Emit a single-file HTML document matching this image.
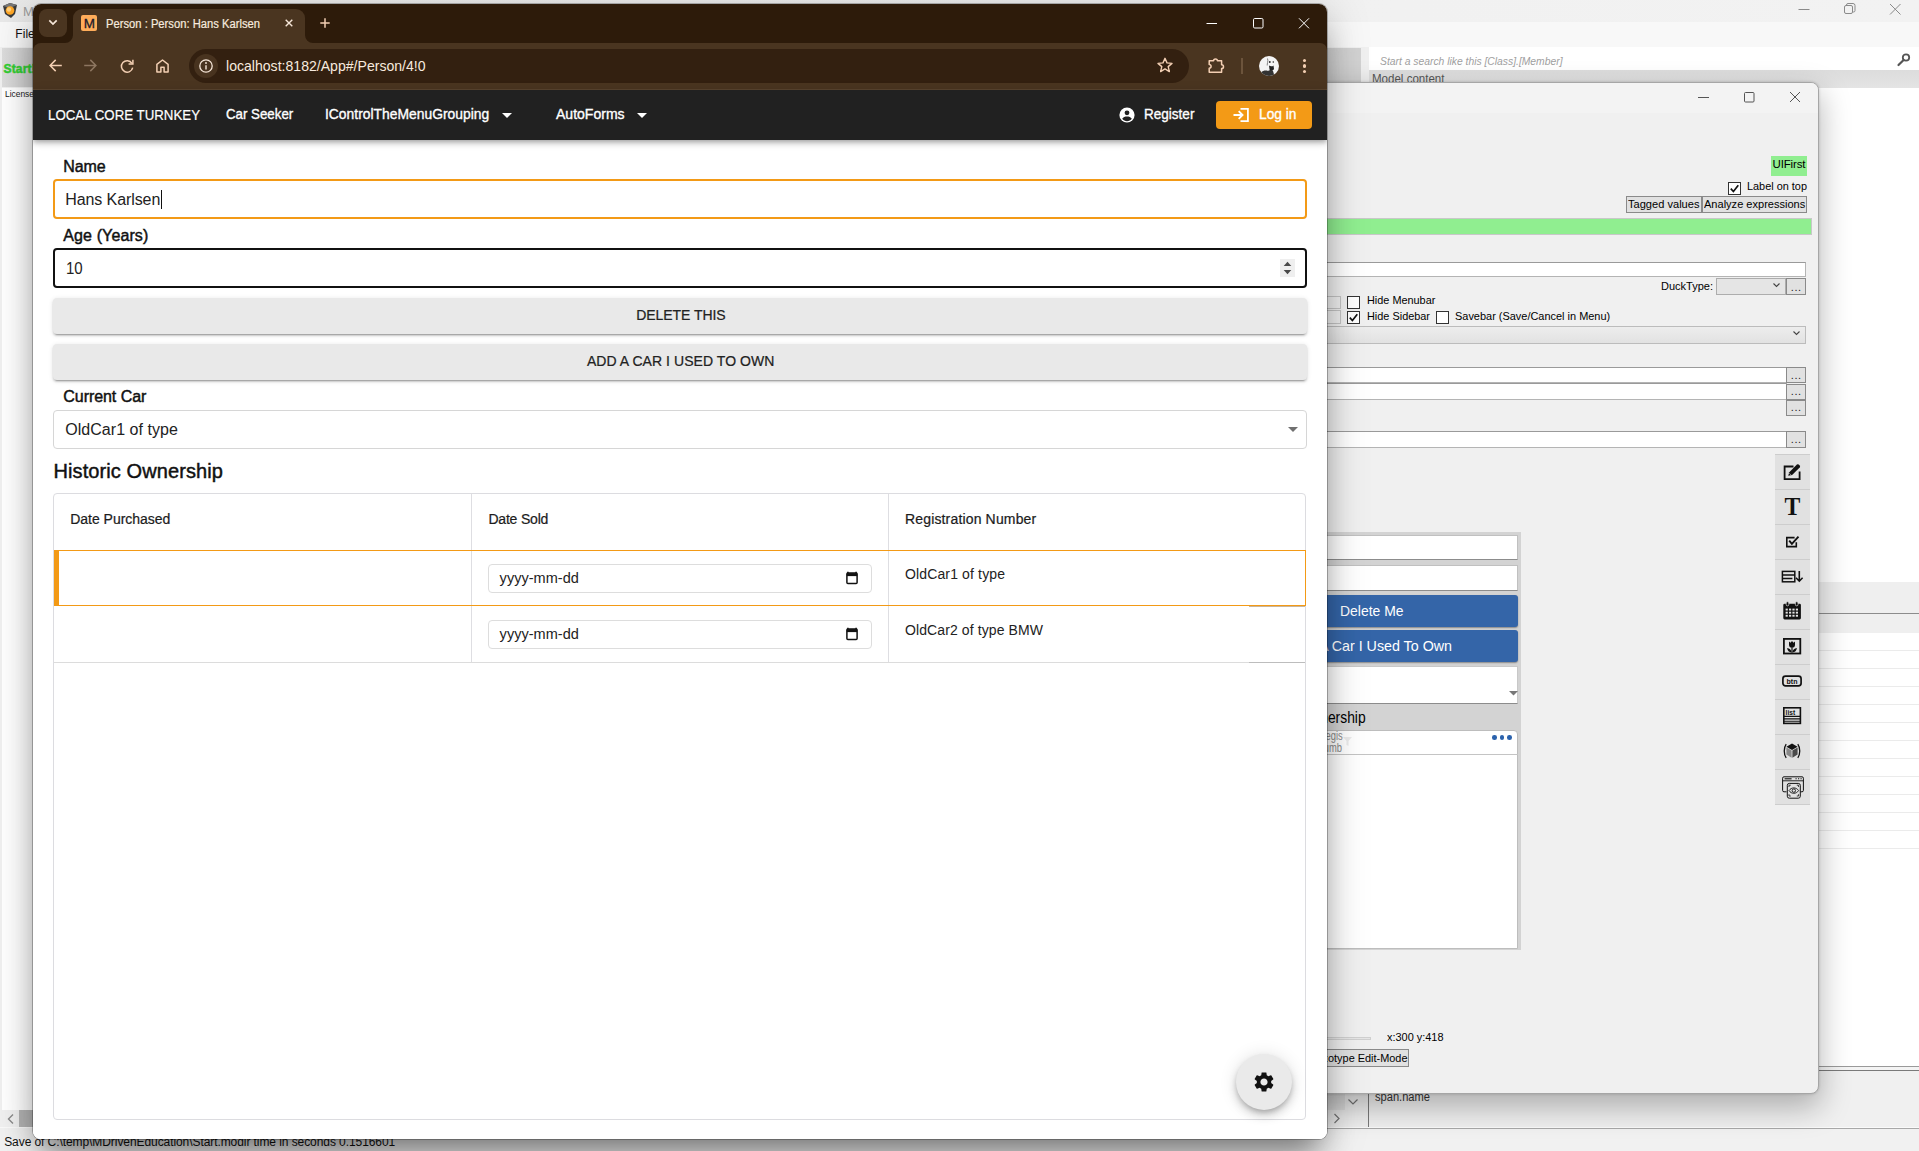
<!DOCTYPE html>
<html lang="en"><head><meta charset="utf-8"><title>Person : Person: Hans Karlsen</title>
<style>
html,body{margin:0;padding:0;background:#fff}
body{width:1919px;height:1151px;overflow:hidden;font-family:"Liberation Sans",sans-serif}
#root{position:relative;width:1919px;height:1151px;overflow:hidden;background:#fff}
#root div,#root svg{position:absolute}
.t{position:absolute;white-space:nowrap;line-height:normal}
</style></head><body><div id="root">
<div style="left:0px;top:0px;width:1919px;height:22px;background:linear-gradient(90deg,#e9e9e9 0,#eeeeee 300px,#f1f1f1 1400px,#f2f2f2 100%)"></div>
<div style="left:0px;top:22px;width:1919px;height:25px;background:#f8f8f8"></div>
<svg style="position:absolute;left:2px;top:2px" width="16" height="16" viewBox="0 0 16 16"><polygon points="1,4 8,1 15,3 13,12 9,16 3,12" fill="#3a3a3a"/><polygon points="1,4 8,1 15,3 8,6" fill="#777"/><circle cx="8" cy="8.5" r="4.3" fill="#ffa726"/><circle cx="7" cy="7.5" r="2.2" fill="#ffd180"/></svg>
<span id="t0" class="t" style="left:23px;top:4.00px;font-size:13px;color:#9a9a9a;">MDriven Designer</span>
<span id="t1" class="t" style="left:15.3px;top:27.00px;font-size:12px;color:#111;letter-spacing:0.052px;">File</span>
<div style="left:0px;top:47px;width:1919px;height:41px;background:#f0f0f0"></div>
<div style="left:2px;top:48px;width:1359px;height:39px;background:linear-gradient(90deg,#dcdcdc 0,#c9c9c9 40px,#d2d2d2 100%)"></div>
<span id="t2" class="t" style="left:3.6px;top:62.00px;font-size:12px;color:#32cd32;font-weight:700;-webkit-text-stroke:0.5px #32cd32;letter-spacing:0.131px;">Start!</span>
<div style="left:1369px;top:47px;width:550px;height:23px;background:#fff"></div>
<span id="t3" class="t" style="left:1380px;top:55.00px;font-size:11.5px;color:#a0a0a0;font-style:italic;transform:scaleX(0.8980);transform-origin:0 0;">Start a search like this [Class].[Member]</span>
<svg style="position:absolute;left:1896px;top:52px" width="16" height="16" viewBox="0 0 16 16"><circle cx="10" cy="5.5" r="3.2" fill="none" stroke="#555" stroke-width="1.8"/><path d="M7.6 8 L2.5 13" stroke="#555" stroke-width="2.2" stroke-linecap="round"/></svg>
<div style="left:1369px;top:70px;width:550px;height:18px;background:linear-gradient(#dcdcdc,#e4e4e4)"></div>
<span id="t4" class="t" style="left:1371.7px;top:72.00px;font-size:12px;color:#555;transform:scaleX(0.9617);transform-origin:0 0;">Model content</span>
<svg style="position:absolute;left:1790px;top:0" width="129" height="22" viewBox="0 0 129 22" fill="none" stroke="#8a8a8a" stroke-width="1"><path d="M8.5 9.5h11"/><rect x="54.5" y="5.5" width="8" height="8" rx="1.5"/><path d="M56.5 5.5v-0.5a1.5 1.5 0 0 1 1.5-1.5h5a2 2 0 0 1 2 2v5a1.5 1.5 0 0 1-1.5 1.5h-0.5"/><path d="M100 4l10.5 10.5M110.5 4l-10.5 10.5"/></svg>
<div style="left:0px;top:88px;width:1919px;height:1040px;background:#fff"></div>
<div style="left:0px;top:88px;width:2px;height:1040px;background:#f0f0f0"></div>
<span id="t5" class="t" style="left:4.6px;top:89.00px;font-size:9px;color:#222;transform:scaleX(0.9345);transform-origin:0 0;">License</span>
<div style="left:1800px;top:582px;width:119px;height:31px;background:#efefef"></div>
<div style="left:1800px;top:612.5px;width:119px;height:1px;background:#8c8c8c"></div>
<div style="left:1800px;top:613.5px;width:119px;height:19.5px;background:#efefef"></div>
<div style="left:1800px;top:650px;width:119px;height:1px;background:#ebebeb"></div><div style="left:1800px;top:668px;width:119px;height:1px;background:#ebebeb"></div><div style="left:1800px;top:686px;width:119px;height:1px;background:#ebebeb"></div><div style="left:1800px;top:704px;width:119px;height:1px;background:#ebebeb"></div><div style="left:1800px;top:722px;width:119px;height:1px;background:#ebebeb"></div><div style="left:1800px;top:740px;width:119px;height:1px;background:#ebebeb"></div><div style="left:1800px;top:758px;width:119px;height:1px;background:#ebebeb"></div><div style="left:1800px;top:776px;width:119px;height:1px;background:#ebebeb"></div><div style="left:1800px;top:794px;width:119px;height:1px;background:#ebebeb"></div><div style="left:1800px;top:812px;width:119px;height:1px;background:#ebebeb"></div><div style="left:1800px;top:830px;width:119px;height:1px;background:#ebebeb"></div><div style="left:1800px;top:848px;width:119px;height:1px;background:#ebebeb"></div>
<div style="left:1327px;top:1066px;width:592px;height:1px;background:#9a9a9a"></div>
<div style="left:1327px;top:1067px;width:592px;height:3px;background:#f4f4f4"></div>
<div style="left:1327px;top:1070px;width:592px;height:58px;background:#f0f0f0"></div>
<div style="left:1368px;top:1070px;width:560px;height:58px;border:1px solid #7a7a7a;background:#f0f0f0;box-sizing:border-box"></div>
<span id="t6" class="t" style="left:1374.8px;top:1090.00px;font-size:12px;color:#333;transform:scaleX(0.9263);transform-origin:0 0;">span.name</span>
<div style="left:1327px;top:1092px;width:18px;height:18px;background:#e4e4e4"></div>
<svg style="position:absolute;left:1330px;top:1094px" width="30" height="32" viewBox="0 0 30 32" fill="none" stroke="#777" stroke-width="1.2"><path d="M18.5 5.5l4.5 4.5l4.5-4.5"/><path d="M4.5 20l4.5 4.5l-4.5 4.5"/></svg>
<div style="left:0px;top:1110px;width:1327px;height:17px;background:#f0f0f0"></div>
<div style="left:19px;top:1110px;width:1308px;height:17px;background:#b4b4b4"></div>
<svg style="position:absolute;left:6px;top:1112px" width="10" height="14" viewBox="0 0 10 14" fill="none" stroke="#8a8a8a" stroke-width="1.4"><path d="M7 2.5l-4.5 4.5l4.5 4.5"/></svg>
<div style="left:0px;top:1127px;width:1919px;height:1px;background:#fafafa"></div>
<div style="left:0px;top:1128px;width:1919px;height:23px;background:#f1f1f1"></div>
<div style="left:1327px;top:1128px;width:592px;height:1px;background:#a8a8a8"></div>
<span id="t7" class="t" style="left:4.2px;top:1135.00px;font-size:12px;color:#111;letter-spacing:-0.075px;">Save of C:\temp\MDrivenEducation\Start.modlr time in seconds 0.1516601</span>
<div style="left:900px;top:82px;width:918.5px;height:1011.5px;background:#f0f0f0;border:1px solid #a6a6a6;box-sizing:border-box;border-radius:8px;box-shadow:0 12px 30px 2px rgba(0,0,0,0.27),0 0 3px rgba(0,0,0,0.18);"></div>
<div style="left:901px;top:83px;width:916.5px;height:30px;background:#f3f3f3;border-radius:7px 7px 0 0"></div>
<svg style="position:absolute;left:1690px;top:86px" width="120" height="22" viewBox="0 0 120 22" fill="none" stroke="#555" stroke-width="1"><path d="M8 11.5h11"/><rect x="54.5" y="6.5" width="9.5" height="9.5" rx="1"/><path d="M100 6l10 10M110 6l-10 10"/></svg>
<div style="left:1770.5px;top:156px;width:36.5px;height:20px;background:#90ee90"></div>
<span id="t8" class="t" style="left:1772.5px;top:158.00px;font-size:11.5px;color:#000;letter-spacing:-0.143px;">UIFirst</span>
<div style="left:1728px;top:182px;width:13px;height:13px;background:#fff;border:1px solid #333;box-sizing:border-box;"><svg style="position:absolute;left:0;top:0" width="11" height="11" viewBox="0 0 11 11"><path d="M1.8 5.6l2.6 2.9l4.9-6.3" fill="none" stroke="#111" stroke-width="1.7"/></svg></div>
<span id="t9" class="t" style="left:1746.9px;top:180.00px;font-size:11.5px;color:#000;transform:scaleX(0.9477);transform-origin:0 0;">Label on top</span>
<div style="left:1626px;top:196px;width:76px;height:17px;background:#e1e1e1;border:1px solid #8a8a8a;box-sizing:border-box;"></div>
<span id="t10" class="t" style="left:1628.3px;top:198.00px;font-size:11.5px;color:#000;transform:scaleX(0.9640);transform-origin:0 0;">Tagged values</span>
<div style="left:1701.5px;top:196px;width:105.5px;height:17px;background:#e1e1e1;border:1px solid #8a8a8a;box-sizing:border-box;"></div>
<span id="t11" class="t" style="left:1704px;top:198.00px;font-size:11.5px;color:#000;transform:scaleX(0.9603);transform-origin:0 0;">Analyze expressions</span>
<div style="left:1200px;top:218px;width:612px;height:17px;background:#90ee90;border:1px solid #c8c8c8;box-sizing:border-box"></div>
<div style="left:1200px;top:262px;width:606px;height:14.5px;background:#fff;border:1px solid #b4b4b4;border-top-color:#9a9a9a;box-sizing:border-box;"></div>
<span id="t12" class="t" style="left:1660.7px;top:280.00px;font-size:11.5px;color:#000;transform:scaleX(0.9571);transform-origin:0 0;">DuckType:</span>
<div style="left:1716px;top:277.5px;width:70px;height:17.5px;background:#e5e5e5;border:1px solid #adadad;box-sizing:border-box"></div>
<svg style="position:absolute;left:1772px;top:282px" width="9" height="7" viewBox="0 0 9 7" fill="none" stroke="#444" stroke-width="1.1"><path d="M1.5 1.5l3 3l3-3"/></svg>
<div style="left:1786.4px;top:277.5px;width:19.6px;height:17.5px;background:#e1e1e1;border:1px solid #8a8a8a;box-sizing:border-box;"><span class="t" style="left:0;right:0;text-align:center;top:3.0px;font-size:11px;line-height:11px;color:#222;letter-spacing:0.5px">...</span></div>
<div style="left:1300px;top:295.5px;width:40.5px;height:13.5px;background:#f0f0f0;border:1px solid #c4c4c4;box-sizing:border-box"></div>
<div style="left:1300px;top:310px;width:40.5px;height:14px;background:#f0f0f0;border:1px solid #c4c4c4;box-sizing:border-box"></div>
<div style="left:1347px;top:296px;width:13px;height:13px;background:#fff;border:1px solid #333;box-sizing:border-box;"></div>
<span id="t13" class="t" style="left:1366.5px;top:294.00px;font-size:11.5px;color:#000;transform:scaleX(0.9455);transform-origin:0 0;">Hide Menubar</span>
<div style="left:1347px;top:311.3px;width:13px;height:13px;background:#fff;border:1px solid #333;box-sizing:border-box;"><svg style="position:absolute;left:0;top:0" width="11" height="11" viewBox="0 0 11 11"><path d="M1.8 5.6l2.6 2.9l4.9-6.3" fill="none" stroke="#111" stroke-width="1.7"/></svg></div>
<span id="t14" class="t" style="left:1366.5px;top:310.00px;font-size:11.5px;color:#000;transform:scaleX(0.9476);transform-origin:0 0;">Hide Sidebar</span>
<div style="left:1436px;top:311.3px;width:13px;height:13px;background:#fff;border:1px solid #333;box-sizing:border-box;"></div>
<span id="t15" class="t" style="left:1455px;top:310.00px;font-size:11.5px;color:#000;transform:scaleX(0.9521);transform-origin:0 0;">Savebar (Save/Cancel in Menu)</span>
<div style="left:1200px;top:325.5px;width:606px;height:18px;background:linear-gradient(#ededed,#e2e2e2);border:1px solid #bcbcbc;box-sizing:border-box"></div>
<svg style="position:absolute;left:1792px;top:330px" width="9" height="7" viewBox="0 0 9 7" fill="none" stroke="#444" stroke-width="1.1"><path d="M1.5 1.5l3 3l3-3"/></svg>
<div style="left:1200px;top:367.3px;width:587px;height:16px;background:#fff;border:1px solid #b4b4b4;border-top-color:#9a9a9a;box-sizing:border-box;"></div>
<div style="left:1786.4px;top:367.3px;width:19.6px;height:16px;background:#e1e1e1;border:1px solid #8a8a8a;box-sizing:border-box;"><span class="t" style="left:0;right:0;text-align:center;top:1.5px;font-size:11px;line-height:11px;color:#222;letter-spacing:0.5px">...</span></div>
<div style="left:1200px;top:383.3px;width:587px;height:16.5px;background:#fff;border:1px solid #b4b4b4;border-top-color:#9a9a9a;box-sizing:border-box;"></div>
<div style="left:1786.4px;top:383.5px;width:19.6px;height:16.3px;background:#e1e1e1;border:1px solid #8a8a8a;box-sizing:border-box;"><span class="t" style="left:0;right:0;text-align:center;top:1.8px;font-size:11px;line-height:11px;color:#222;letter-spacing:0.5px">...</span></div>
<div style="left:1786.4px;top:400.2px;width:19.6px;height:15.8px;background:#e1e1e1;border:1px solid #8a8a8a;box-sizing:border-box;"><span class="t" style="left:0;right:0;text-align:center;top:1.3px;font-size:11px;line-height:11px;color:#222;letter-spacing:0.5px">...</span></div>
<div style="left:1200px;top:431px;width:587px;height:16.7px;background:#fff;border:1px solid #b4b4b4;border-top-color:#9a9a9a;box-sizing:border-box;"></div>
<div style="left:1786.4px;top:431px;width:19.6px;height:16.7px;background:#e1e1e1;border:1px solid #8a8a8a;box-sizing:border-box;"><span class="t" style="left:0;right:0;text-align:center;top:2.2px;font-size:11px;line-height:11px;color:#222;letter-spacing:0.5px">...</span></div>
<div style="left:1775px;top:454px;width:35px;height:350.5px;background:#e1e1e1"></div>
<div style="left:1775px;top:454px;width:35px;height:1px;background:#cdcdcd"></div><div style="left:1775px;top:489px;width:35px;height:1px;background:#cdcdcd"></div><div style="left:1775px;top:524px;width:35px;height:1px;background:#cdcdcd"></div><div style="left:1775px;top:559px;width:35px;height:1px;background:#cdcdcd"></div><div style="left:1775px;top:594px;width:35px;height:1px;background:#cdcdcd"></div><div style="left:1775px;top:629px;width:35px;height:1px;background:#cdcdcd"></div><div style="left:1775px;top:664px;width:35px;height:1px;background:#cdcdcd"></div><div style="left:1775px;top:699px;width:35px;height:1px;background:#cdcdcd"></div><div style="left:1775px;top:734px;width:35px;height:1px;background:#cdcdcd"></div><div style="left:1775px;top:769px;width:35px;height:1px;background:#cdcdcd"></div><div style="left:1775px;top:804px;width:35px;height:1px;background:#cdcdcd"></div>
<div style="left:1200px;top:531.5px;width:321px;height:418px;background:#d3d3d3"></div>
<div style="left:1200px;top:534.5px;width:317.7px;height:25.8px;background:#fff;border:1px solid #c0c0c0;border-bottom:1.5px solid #8c8c8c;box-sizing:border-box"></div>
<div style="left:1200px;top:565.3px;width:317.7px;height:25.3px;background:#fff;border:1px solid #c0c0c0;border-bottom:1.5px solid #8c8c8c;box-sizing:border-box"></div>
<div style="left:1200px;top:595px;width:317.7px;height:32px;background:#3465a8;border-radius:3px;box-shadow:0 1px 1.5px rgba(0,0,0,0.35)"></div>
<span id="t16" class="t" style="left:1339.5px;top:602.00px;font-size:15px;color:#fff;transform:scaleX(0.9287);transform-origin:0 0;">Delete Me</span>
<div style="left:1200px;top:630.3px;width:317.7px;height:32px;background:#3465a8;border-radius:3px;box-shadow:0 1px 1.5px rgba(0,0,0,0.35)"></div>
<span id="t17" class="t" style="left:1318.5px;top:637.00px;font-size:15px;color:#fff;transform:scaleX(0.9514);transform-origin:0 0;">A Car I Used To Own</span>
<div style="left:1200px;top:666px;width:317.7px;height:37.5px;background:#fff;border:1px solid #c8c8c8;border-bottom:1.5px solid #8c8c8c;box-sizing:border-box"></div>
<svg style="position:absolute;left:1509px;top:691px" width="9" height="5" viewBox="0 0 9 5"><path d="M0 0h9l-4.5 4.5z" fill="#777"/></svg>
<span id="t18" class="t" style="right:553.7px;top:708.00px;font-size:17px;color:#000;transform:scaleX(0.815);transform-origin:100% 0;">Historic Ownership</span>
<div style="left:1200px;top:729.5px;width:317.7px;height:219px;background:#fff;border:1px solid #bdbdbd;box-sizing:border-box;border-radius:4px 4px 0 0"></div>
<div style="left:1200px;top:754px;width:317.7px;height:1px;background:#c4c4c4"></div>
<span id="t19" class="t" style="right:576.7px;top:729.00px;font-size:12px;color:#8a8a8a;transform:scaleX(0.78);transform-origin:100% 0;">Regis</span>
<span id="t20" class="t" style="right:576.7px;top:741.00px;font-size:12px;color:#8a8a8a;transform:scaleX(0.78);transform-origin:100% 0;">Numb</span>
<svg style="position:absolute;left:1343px;top:737px" width="9" height="9" viewBox="0 0 9 9"><path d="M0 0h9l-3.500 4v5l-2-1v-4z" fill="#ececec"/></svg>
<div style="left:1492.3px;top:735px;width:4.6px;height:4.6px;background:#2b62ad;border-radius:50%"></div><div style="left:1499.7px;top:735px;width:4.6px;height:4.6px;background:#2b62ad;border-radius:50%"></div><div style="left:1507.1px;top:735px;width:4.6px;height:4.6px;background:#2b62ad;border-radius:50%"></div>
<div style="left:1300px;top:1036.5px;width:70.5px;height:3.5px;background:#e6e6e6;border:1px solid #d0d0d0;box-sizing:border-box"></div>
<span id="t21" class="t" style="left:1386.5px;top:1031.00px;font-size:11.5px;color:#000;transform:scaleX(0.9501);transform-origin:0 0;">x:300 y:418</span>
<div style="left:1300px;top:1049.3px;width:109px;height:17.7px;background:#e1e1e1;border:1px solid #8a8a8a;box-sizing:border-box;"></div>
<span id="t22" class="t" style="left:1327.6px;top:1052.00px;font-size:11.5px;color:#000;transform:scaleX(0.9493);transform-origin:0 0;">otype Edit-Mode</span>
<span id="t23" class="t" style="right:591.5999999999999px;top:1052.00px;font-size:11.5px;color:#000;">Prot</span>
<svg style="position:absolute;left:1783px;top:462px;overflow:visible" width="19" height="19" viewBox="0 0 19 19"><path d="M10.5 4.5H1.6V17.2H16.6V9.5" fill="none" stroke="#111" stroke-width="1.8"/><path d="M5.2 13.8l1.1-3.6l7.6-7.6a1.3 1.3 0 0 1 1.8 0l1 1a1.3 1.3 0 0 1 0 1.8l-7.6 7.6z" fill="#111"/><path d="M6.3 11.2l1.8 1.8" stroke="#e1e1e1" stroke-width="0.6"/></svg>
<svg style="position:absolute;left:1780px;top:494px;overflow:visible" width="25" height="25" viewBox="0 0 25 25"><text x="12.4" y="21.2" text-anchor="middle" font-family="Liberation Serif,serif" font-weight="700" font-size="25.5" fill="#111" transform="translate(12.4 0) scale(0.93 1) translate(-12.4 0)">T</text></svg>
<svg style="position:absolute;left:1785px;top:534px;overflow:visible" width="16" height="16" viewBox="0 0 16 16"><path d="M11.3 8.2V12.6H1.8V3.6H9.6" fill="none" stroke="#111" stroke-width="1.6"/><path d="M4.2 6.6l2.7 3.2l6.6-7.2" fill="none" stroke="#111" stroke-width="1.9"/></svg>
<svg style="position:absolute;left:1781px;top:569px;overflow:visible" width="24" height="15" viewBox="0 0 24 15"><rect x="1.4" y="2.4" width="12.4" height="10.4" fill="none" stroke="#111" stroke-width="1.5"/><path d="M1.4 5.9h12.4M1.4 9.4h10" stroke="#111" stroke-width="1.5"/><path d="M18.3 2v10M15 8.8l3.3 3.4l3.3-3.4" fill="none" stroke="#111" stroke-width="1.6"/></svg>
<svg style="position:absolute;left:1783px;top:601px;overflow:visible" width="18" height="19" viewBox="0 0 18 19"><rect x="0.3" y="2.8" width="17.6" height="15.6" rx="1.3" fill="#111"/><rect x="3.2" y="0.8" width="2.6" height="4" rx="1.1" fill="#111" stroke="#e1e1e1" stroke-width="0.7"/><rect x="12.4" y="0.8" width="2.6" height="4" rx="1.1" fill="#111" stroke="#e1e1e1" stroke-width="0.7"/><rect x="2.6" y="7.6" width="2.2" height="1.9" fill="#e1e1e1"/><rect x="2.6" y="10.7" width="2.2" height="1.9" fill="#e1e1e1"/><rect x="2.6" y="13.8" width="2.2" height="1.9" fill="#e1e1e1"/><rect x="6.0" y="7.6" width="2.2" height="1.9" fill="#e1e1e1"/><rect x="6.0" y="10.7" width="2.2" height="1.9" fill="#e1e1e1"/><rect x="6.0" y="13.8" width="2.2" height="1.9" fill="#e1e1e1"/><rect x="9.4" y="7.6" width="2.2" height="1.9" fill="#e1e1e1"/><rect x="9.4" y="10.7" width="2.2" height="1.9" fill="#e1e1e1"/><rect x="9.4" y="13.8" width="2.2" height="1.9" fill="#e1e1e1"/><rect x="12.799999999999999" y="7.6" width="2.2" height="1.9" fill="#e1e1e1"/><rect x="12.799999999999999" y="10.7" width="2.2" height="1.9" fill="#e1e1e1"/><rect x="12.799999999999999" y="13.8" width="2.2" height="1.9" fill="#e1e1e1"/></svg>
<svg style="position:absolute;left:1783px;top:638px;overflow:visible" width="18" height="17" viewBox="0 0 18 17"><rect x="0.9" y="0.9" width="16.4" height="14.6" fill="none" stroke="#111" stroke-width="1.8"/><path d="M6 3.4l1.5 1.4l1.5-1.7l1.5 1.7l1.5-1.4v3.4a3 3 0 0 1-6 0z" fill="#111"/><path d="M8.4 9.6h1.2v4.9h-1.2z" fill="#111"/><path d="M8.6 14.4c-2.6 0-4.2-1.5-4.5-4.3c2.4 0.3 4.1 1.6 4.5 4.3zM9.4 14.4c2.6 0 4.2-1.5 4.5-4.3c-2.4 0.3-4.1 1.6-4.5 4.3z" fill="#111"/></svg>
<svg style="position:absolute;left:1782px;top:675px;overflow:visible" width="20" height="12" viewBox="0 0 20 12"><rect x="0.9" y="1.2" width="18.2" height="9.6" rx="2.6" fill="none" stroke="#111" stroke-width="1.7"/><text x="10" y="8.6" text-anchor="middle" font-family="Liberation Sans,sans-serif" font-weight="700" font-size="7" fill="#111">btn</text></svg>
<svg style="position:absolute;left:1783px;top:707px;overflow:visible" width="18" height="17" viewBox="0 0 18 17"><rect x="0.8" y="0.8" width="16.6" height="15.6" fill="none" stroke="#111" stroke-width="1.6"/><text x="2.6" y="7.6" font-family="Liberation Sans,sans-serif" font-weight="700" font-size="6.6" fill="#111">list</text><path d="M1 9.4h16M1 11.9h16M1 14.3h16" stroke="#111" stroke-width="1.1"/></svg>
<svg style="position:absolute;left:1783px;top:743px;overflow:visible" width="18" height="16" viewBox="0 0 18 16"><path d="M3.2 1.2c-2.6 3.6-2.6 10 0 13.6M14.8 1.2c2.6 3.6 2.6 10 0 13.6" fill="none" stroke="#111" stroke-width="1.3"/><path d="M9 0.6l5.6 3.2l-5.6 3.2l-5.6-3.200z" fill="#111"/><path d="M3.4 4.6l5.2 3v7.200l-5.2-3.200z" fill="#888"/><path d="M14.600 4.600l-5.200 3v7.200l5.200-3.200z" fill="#4a4a4a"/></svg>
<svg style="position:absolute;left:1782px;top:776px;overflow:visible" width="22" height="23" viewBox="0 0 22 23"><path d="M4.500 15.800h-2.500a1.400 1.400 0 0 1-1.400-1.400v-12.200a1.400 1.400 0 0 1 1.400-1.400h18a1.400 1.400 0 0 1 1.400 1.400v12.200a1.400 1.400 0 0 1-1.400 1.400h-1.800" fill="none" stroke="#111" stroke-width="1"/><path d="M0.800 4.800h20.400" stroke="#111" stroke-width="0.9"/><path d="M2.600 2.800h7" stroke="#111" stroke-width="1.100"/><path d="M13.500 2.800h1.200M16 2.800h1.200M18.500 2.800h1.200" stroke="#111" stroke-width="1.100"/><rect x="5.300" y="7.400" width="13" height="14.800" rx="2" fill="#e1e1e1" stroke="#111" stroke-width="1"/><path d="M7 14.600c2.400-3.600 7.200-3.600 9.600 0c-2.400 3.600-7.200 3.600-9.600 0z" fill="none" stroke="#111" stroke-width="0.9"/><circle cx="11.800" cy="14.600" r="1.700" fill="none" stroke="#111" stroke-width="0.9"/><path d="M7 11v-1.800h1.800M16.600 11v-1.800h-1.800M7 18.200v1.800h1.800M16.600 18.200v1.800h-1.800" fill="none" stroke="#111" stroke-width="0.8"/></svg>
<div style="left:33px;top:4px;width:1294px;height:1135px;border-radius:8px;box-shadow:0 0 0 1px rgba(0,0,0,0.26),0 22px 30px -8px rgba(0,0,0,0.45),0 3px 46px rgba(0,0,0,0.17);"></div>
<div style="left:33px;top:4px;width:1294px;height:1135px;border-radius:8px;overflow:hidden;background:#fff"><div style="left:-33px;top:-4px;width:1919px;height:1151px">
<div style="left:33px;top:4px;width:1294px;height:60px;background:#2d1b0a"></div>
<div style="left:33px;top:43px;width:1294px;height:46px;background:#4a3520;border-radius:8px 7px 0 0"></div>
<div style="left:33px;top:89px;width:1294px;height:1px;background:#5b4631"></div>
<div style="left:39px;top:9px;width:28px;height:28px;background:#4a3520;border-radius:8px"></div>
<svg style="position:absolute;left:48px;top:19px;overflow:visible" width="10" height="7" viewBox="0 0 10 7"><path d="M1.300 1.300l3.700 3.700l3.700-3.700" fill="none" stroke="#f6e6d8" stroke-width="1.700"/></svg>
<div style="left:73px;top:9px;width:232px;height:40px;background:#4a3520;border-radius:9px 9px 0 0"></div>
<svg style="position:absolute;left:65px;top:35px;overflow:visible" width="8" height="8" viewBox="0 0 8 8"><path d="M8 0v8h-8a8 8 0 0 0 8-8z" fill="#4a3520"/></svg>
<svg style="position:absolute;left:305px;top:35px;overflow:visible" width="8" height="8" viewBox="0 0 8 8"><path d="M0 0v8h8a8 8 0 0 1-8-8z" fill="#4a3520"/></svg>
<div style="left:81px;top:15px;width:16px;height:16px;background:#ffad5a;border-radius:2px"></div>
<span id="t24" class="t" style="left:83.7px;top:16.00px;font-size:13.5px;color:#1d1a2a;-webkit-text-stroke:0.300px #1d1a2a;">M</span>
<span id="t25" class="t" style="left:105.5px;top:17.00px;font-size:12px;color:#f7eadf;-webkit-text-stroke:0.2px #f7eadf;transform:scaleX(0.9347);transform-origin:0 0;">Person : Person: Hans Karlsen</span>
<svg style="position:absolute;left:285px;top:19.1px;overflow:visible" width="8" height="8" viewBox="0 0 8 8"><path d="M0.700 0.700l6.600 6.600M7.300 0.700l-6.600 6.600" stroke="#f6e6d8" stroke-width="1.400"/></svg>
<svg style="position:absolute;left:320px;top:18px;overflow:visible" width="10" height="10" viewBox="0 0 10 10"><path d="M5 0.300v9.400M0.300 5h9.400" stroke="#f3cfb3" stroke-width="1.500"/></svg>
<svg style="position:absolute;left:1200px;top:14px;overflow:visible" width="112" height="18" viewBox="0 0 112 18"><path d="M6.500 9.500h10.500" stroke="#fff" stroke-width="1"/><rect x="53.500" y="4.500" width="9.500" height="9.500" rx="1.200" fill="none" stroke="#fff" stroke-width="1"/><path d="M99 4.300l10 10M109 4.300l-10 10" stroke="#fff" stroke-width="1"/></svg>
<svg style="position:absolute;left:48.5px;top:59.3px;overflow:visible" width="13" height="13" viewBox="0 0 13 13"><path d="M12.800 6.500h-11.600M6.700 0.900l-5.600 5.600l5.600 5.600" fill="none" stroke="#f3cfb3" stroke-width="1.500"/></svg>
<svg style="position:absolute;left:84.3px;top:59.3px;overflow:visible" width="13" height="13" viewBox="0 0 13 13"><path d="M0.200 6.500h11.600M6.300 0.900l5.600 5.600l-5.600 5.600" fill="none" stroke="#8d7660" stroke-width="1.500"/></svg>
<svg style="position:absolute;left:120px;top:58.8px;overflow:visible" width="14" height="14" viewBox="0 0 14 14"><path d="M11.900 4.300a5.700 5.700 0 1 0 0.800 4.300" fill="none" stroke="#f3cfb3" stroke-width="1.500"/><path d="M12.900 0.800v4.300h-4.300" fill="none" stroke="#f3cfb3" stroke-width="1.500"/></svg>
<svg style="position:absolute;left:156.3px;top:58.6px;overflow:visible" width="13" height="14" viewBox="0 0 13 14"><path d="M0.900 13v-7.700l5.600-4.300l5.600 4.300v7.700h-4v-4.800h-3.200v4.800z" fill="none" stroke="#f3cfb3" stroke-width="1.500" stroke-linejoin="round"/></svg>
<div style="left:189px;top:49px;width:1000px;height:34px;background:#332010;border-radius:17px"></div>
<div style="left:194px;top:54px;width:24px;height:24px;background:#48331f;border-radius:50%"></div>
<svg style="position:absolute;left:199px;top:59px;overflow:visible" width="14" height="14" viewBox="0 0 14 14"><circle cx="7" cy="7" r="6.200" fill="none" stroke="#f6e6d8" stroke-width="1.300"/><path d="M7 6.200v4.200" stroke="#f6e6d8" stroke-width="1.400"/><circle cx="7" cy="4" r="0.900" fill="#f6e6d8"/></svg>
<span id="t26" class="t" style="left:226.2px;top:58.00px;font-size:14.5px;color:#f7eadf;transform:scaleX(0.9709);transform-origin:0 0;">localhost:8182/App#/Person/4!0</span>
<svg style="position:absolute;left:1156.7px;top:57.4px;overflow:visible" width="16" height="16" viewBox="0 0 16 16"><path d="M8 1.300l2 4.600l5 0.450l-3.800 3.300l1.150 4.900l-4.350-2.600l-4.350 2.600l1.150-4.900l-3.800-3.300l5-0.450z" fill="none" stroke="#f3cfb3" stroke-width="1.400" stroke-linejoin="round"/></svg>
<svg style="position:absolute;left:1207.5px;top:56.5px;overflow:visible" width="17" height="17" viewBox="0 0 17 17"><path d="M1.200 15.300v-4.100a1.900 1.900 0 0 0 0-3.800v-3.600h4.400a1.900 1.900 0 0 1 3.800 0h4.200v4a1.900 1.900 0 0 1 0 3.800v3.700z" fill="none" stroke="#f3cfb3" stroke-width="1.500" stroke-linejoin="round"/></svg>
<div style="left:1241px;top:58px;width:1.5px;height:16px;background:#6c543c"></div>
<svg style="position:absolute;left:1259px;top:55.8px;overflow:visible" width="20" height="20" viewBox="0 0 20 20"><defs><clipPath id="avc"><circle cx="10" cy="10" r="10"/></clipPath></defs><circle cx="10" cy="10" r="10" fill="#f4f4f4"/><g clip-path="url(#avc)"><path d="M2 16.500c2-2 5-2.500 7-1.500c1.500-1 3.500-1.500 5 0l1.500 5h-14z" fill="#333"/><path d="M10 9.500c1 1 3.500 1.200 4.500 0l0.500 3.500c-1 2-3.500 2.500-4.500 0.500z" fill="#222"/><path d="M8.500 2.500c1 3-0.500 5-0.300 7" stroke="#555" stroke-width="0.700" fill="none"/><circle cx="10.800" cy="6" r="0.900" fill="#222"/><circle cx="14.300" cy="6" r="0.800" fill="#222"/></g></svg>
<div style="left:1303.2px;top:58.8px;width:3.2px;height:3.2px;background:#f3cfb3;border-radius:50%"></div><div style="left:1303.2px;top:64.4px;width:3.2px;height:3.2px;background:#f3cfb3;border-radius:50%"></div><div style="left:1303.2px;top:70.0px;width:3.2px;height:3.2px;background:#f3cfb3;border-radius:50%"></div>
<div style="left:33px;top:90px;width:1294px;height:1049px;background:#fff"></div>
<span id="t27" class="t" style="left:63.3px;top:158.00px;font-size:16px;color:#111;-webkit-text-stroke:0.45px currentColor;letter-spacing:-0.096px;">Name</span>
<div style="left:53px;top:179px;width:1254px;height:40px;border:2px solid #f39a16;border-radius:4px;box-sizing:border-box;background:#fff"></div>
<span id="t28" class="t" style="left:65.3px;top:191.00px;font-size:16px;color:#222;letter-spacing:-0.095px;">Hans Karlsen</span>
<div style="left:161.3px;top:190px;width:1px;height:19px;background:#111"></div>
<span id="t29" class="t" style="left:63.3px;top:227.00px;font-size:16px;color:#111;-webkit-text-stroke:0.45px currentColor;letter-spacing:0.109px;">Age (Years)</span>
<div style="left:53px;top:248px;width:1254px;height:40px;border:2px solid #111;border-radius:4px;box-sizing:border-box;background:#fff"></div>
<span id="t30" class="t" style="left:65.7px;top:260.00px;font-size:16px;color:#222;transform:scaleX(0.9384);transform-origin:0 0;">10</span>
<div style="left:1280px;top:259px;width:15px;height:18px;background:#efefef"></div>
<svg style="position:absolute;left:1283px;top:261px;overflow:visible" width="9" height="14" viewBox="0 0 9 14"><path d="M0.700 5.100l3.800-4.300l3.800 4.300z" fill="#4a4a4a"/><path d="M0.700 9l3.800 4.300l3.800-4.300z" fill="#4a4a4a"/></svg>
<div style="left:53px;top:298px;width:1254px;height:36px;background:#e9e9e9;border-radius:4px;box-shadow:0 3px 1px -2px rgba(0,0,0,.2),0 2px 2px rgba(0,0,0,.14),0 1px 5px rgba(0,0,0,.12);"></div>
<span id="t31" class="t" style="left:636.25px;top:307.00px;font-size:14px;color:#222;-webkit-text-stroke:0.22px currentColor;letter-spacing:-0.060px;">DELETE THIS</span>
<div style="left:53px;top:344px;width:1254px;height:36px;background:#e9e9e9;border-radius:4px;box-shadow:0 3px 1px -2px rgba(0,0,0,.2),0 2px 2px rgba(0,0,0,.14),0 1px 5px rgba(0,0,0,.12);"></div>
<span id="t32" class="t" style="left:586.9px;top:353.00px;font-size:14px;color:#222;-webkit-text-stroke:0.22px currentColor;letter-spacing:0.060px;">ADD A CAR I USED TO OWN</span>
<span id="t33" class="t" style="left:63.3px;top:388.00px;font-size:16px;color:#111;-webkit-text-stroke:0.45px currentColor;letter-spacing:-0.058px;">Current Car</span>
<div style="left:53px;top:409.5px;width:1254px;height:39px;border:1px solid #d6d6d6;border-radius:4px;box-sizing:border-box;background:#fff"></div>
<span id="t34" class="t" style="left:65.3px;top:421.00px;font-size:16px;color:#222;letter-spacing:0.031px;">OldCar1 of type</span>
<svg style="position:absolute;left:1287.5px;top:427px;overflow:visible" width="10" height="5" viewBox="0 0 10 5"><path d="M0 0h10l-5 5z" fill="#707070"/></svg>
<span id="t35" class="t" style="left:53.5px;top:460.00px;font-size:20px;color:#111;-webkit-text-stroke:0.45px currentColor;letter-spacing:0.098px;">Historic Ownership</span>
<div style="left:53px;top:493px;width:1253px;height:626.5px;border:1px solid #dcdce0;border-radius:4px;box-sizing:border-box;background:#fff"></div>
<div style="left:471px;top:494px;width:1px;height:168px;background:#dedee2"></div>
<div style="left:888px;top:494px;width:1px;height:168px;background:#dedee2"></div>
<div style="left:54px;top:662px;width:1251px;height:1px;background:#dcdcdc"></div>
<div style="left:1249px;top:662px;width:56px;height:1px;background:#bdbdbd"></div>
<div style="left:1249px;top:605.6px;width:56px;height:1px;background:#c9b59a"></div>
<div style="left:54px;top:550px;width:1252px;height:56px;border:1px solid #f39a16;border-left:none;box-sizing:border-box"></div>
<div style="left:54px;top:550px;width:4.6px;height:56px;background:#f39a16"></div>
<span id="t36" class="t" style="left:70.2px;top:511.00px;font-size:14px;color:#1c1c1c;-webkit-text-stroke:0.22px currentColor;letter-spacing:-0.016px;">Date Purchased</span>
<span id="t37" class="t" style="left:488.4px;top:511.00px;font-size:14px;color:#1c1c1c;-webkit-text-stroke:0.22px currentColor;letter-spacing:-0.186px;">Date Sold</span>
<span id="t38" class="t" style="left:905px;top:511.00px;font-size:14px;color:#1c1c1c;-webkit-text-stroke:0.22px currentColor;letter-spacing:0.156px;">Registration Number</span>
<div style="left:488px;top:564px;width:384px;height:29px;border:1px solid #dddddd;border-radius:4px;box-sizing:border-box;background:#fff"></div>
<span id="t39" class="t" style="left:499.6px;top:570.00px;font-size:14.5px;color:#222;letter-spacing:0.039px;">yyyy-mm-dd</span>
<svg style="position:absolute;left:846px;top:571px;overflow:visible" width="12" height="13.5" viewBox="0 0 12 13.5"><path d="M1.900 0.800v1.500M10.100 0.800v1.500" stroke="#111" stroke-width="1.500"/><rect x="0.900" y="2.100" width="10.200" height="10.500" rx="1" fill="none" stroke="#111" stroke-width="1.500"/><rect x="0.900" y="2.100" width="10.200" height="3" fill="#111"/></svg>
<div style="left:488px;top:620px;width:384px;height:29px;border:1px solid #dddddd;border-radius:4px;box-sizing:border-box;background:#fff"></div>
<span id="t40" class="t" style="left:499.6px;top:626.00px;font-size:14.5px;color:#222;letter-spacing:0.039px;">yyyy-mm-dd</span>
<svg style="position:absolute;left:846px;top:627px;overflow:visible" width="12" height="13.5" viewBox="0 0 12 13.5"><path d="M1.900 0.800v1.500M10.100 0.800v1.500" stroke="#111" stroke-width="1.500"/><rect x="0.900" y="2.100" width="10.200" height="10.500" rx="1" fill="none" stroke="#111" stroke-width="1.500"/><rect x="0.900" y="2.100" width="10.200" height="3" fill="#111"/></svg>
<span id="t41" class="t" style="left:905px;top:566.00px;font-size:14px;color:#222;letter-spacing:0.138px;">OldCar1 of type</span>
<span id="t42" class="t" style="left:905px;top:622.00px;font-size:14px;color:#222;letter-spacing:0.102px;">OldCar2 of type BMW</span>
<div style="left:1236px;top:1054px;width:56px;height:56px;background:#eaeaea;border-radius:50%;box-shadow:0 3px 5px -1px rgba(0,0,0,.2),0 6px 10px rgba(0,0,0,.14),0 1px 18px rgba(0,0,0,.12)"></div>
<svg style="position:absolute;left:1252px;top:1070px;overflow:visible" width="24" height="24" viewBox="0 0 24 24"><path d="M19.140 12.940c0.040-0.300 0.060-0.610 0.060-0.940c0-0.320-0.020-0.640-0.070-0.940l2.030-1.580c0.180-0.140 0.230-0.410 0.120-0.610l-1.920-3.320c-0.120-0.220-0.370-0.290-0.590-0.220l-2.390 0.960c-0.500-0.380-1.030-0.700-1.620-0.940l-0.360-2.540c-0.040-0.240-0.240-0.410-0.480-0.410h-3.840c-0.240 0-0.430 0.170-0.470 0.410l-0.360 2.540c-0.590 0.240-1.130 0.570-1.620 0.940l-2.390-0.960c-0.220-0.080-0.470 0-0.590 0.220l-1.910 3.320c-0.120 0.210-0.080 0.470 0.120 0.610l2.030 1.580c-0.050 0.300-0.090 0.630-0.090 0.940s0.020 0.640 0.070 0.940l-2.030 1.580c-0.180 0.140-0.230 0.410-0.120 0.610l1.920 3.320c0.120 0.220 0.370 0.290 0.590 0.220l2.390-0.960c0.500 0.380 1.030 0.700 1.620 0.940l0.360 2.540c0.050 0.240 0.240 0.410 0.480 0.410h3.840c0.240 0 0.440-0.170 0.470-0.410l0.360-2.540c0.590-0.240 1.130-0.560 1.620-0.940l2.390 0.960c0.220 0.080 0.470 0 0.590-0.220l1.920-3.320c0.120-0.220 0.070-0.470-0.120-0.610l-2.010-1.580zM12 15.600c-1.980 0-3.600-1.620-3.600-3.600s1.620-3.600 3.600-3.600s3.600 1.620 3.600 3.600s-1.620 3.600-3.600 3.600z" fill="#111"/></svg>
<div style="left:33px;top:90px;width:1294px;height:49.5px;background:#212121;box-shadow:0 2px 4px -1px rgba(0,0,0,.2),0 4px 5px rgba(0,0,0,.14),0 1px 10px rgba(0,0,0,.12)"></div>
<span id="t43" class="t" style="left:48px;top:107.00px;font-size:14.5px;color:#fff;-webkit-text-stroke:0.2px #fff;transform:scaleX(0.9157);transform-origin:0 0;">LOCAL CORE TURNKEY</span>
<span id="t44" class="t" style="left:225.8px;top:106.00px;font-size:14.5px;color:#fff;-webkit-text-stroke:0.350px #fff;transform:scaleX(0.9162);transform-origin:0 0;">Car Seeker</span>
<span id="t45" class="t" style="left:325px;top:106.00px;font-size:14.5px;color:#fff;-webkit-text-stroke:0.350px #fff;transform:scaleX(0.9564);transform-origin:0 0;">IControlTheMenuGrouping</span>
<svg style="position:absolute;left:501.5px;top:113px;overflow:visible" width="10" height="5" viewBox="0 0 10 5"><path d="M0 0h10l-5 5z" fill="#fff"/></svg>
<span id="t46" class="t" style="left:556.2px;top:106.00px;font-size:14.5px;color:#fff;-webkit-text-stroke:0.350px #fff;transform:scaleX(0.9673);transform-origin:0 0;">AutoForms</span>
<svg style="position:absolute;left:637px;top:113px;overflow:visible" width="10" height="5" viewBox="0 0 10 5"><path d="M0 0h10l-5 5z" fill="#fff"/></svg>
<svg style="position:absolute;left:1119px;top:107px;overflow:visible" width="16" height="16" viewBox="0 0 16 16"><circle cx="8" cy="8" r="7.600" fill="#fff"/><circle cx="8" cy="5.800" r="2.400" fill="#212121"/><path d="M3.200 11.800c1-1.700 2.900-2.300 4.800-2.300s3.800 0.600 4.800 2.300c-1.100 1.500-2.900 2.400-4.800 2.400s-3.700-0.900-4.800-2.400z" fill="#212121"/></svg>
<span id="t47" class="t" style="left:1144.3px;top:106.00px;font-size:14.5px;color:#fff;-webkit-text-stroke:0.350px #fff;transform:scaleX(0.9333);transform-origin:0 0;">Register</span>
<div style="left:1216px;top:100.5px;width:96px;height:28.5px;background:#f39a16;border-radius:4px"></div>
<svg style="position:absolute;left:1233px;top:108px;overflow:visible" width="16" height="14" viewBox="0 0 16 14"><path d="M0.500 7h8.500M5.700 3.200l3.800 3.800l-3.800 3.800" fill="none" stroke="#fff" stroke-width="1.900"/><path d="M7.500 0.900h7.400v12.200h-7.400" fill="none" stroke="#fff" stroke-width="1.800"/></svg>
<span id="t48" class="t" style="left:1258.5px;top:106.00px;font-size:14.5px;color:#fff;-webkit-text-stroke:0.350px #fff;transform:scaleX(0.9490);transform-origin:0 0;">Log in</span>
</div></div>
</div></body></html>
